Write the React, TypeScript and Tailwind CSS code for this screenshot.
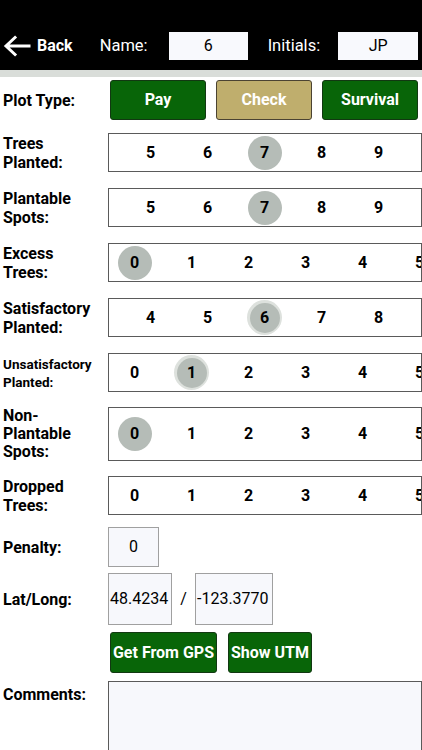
import React from "react";

type PickerProps = {
  values: number[];
  selected: number;
  shift: "a" | "b";
  ring?: boolean;
  tall?: boolean;
};

function Picker({ values, selected, shift, ring, tall }: PickerProps) {
  return (
    <div
      className={
        (tall ? "h-[54px]" : "h-[39px]") +
        " w-[314px] overflow-hidden border-[1.5px] border-[#5a5a5a] bg-white"
      }
    >
      <div
        className={
          shift === "a"
            ? "flex h-full items-center pl-[13px]"
            : "-ml-[3px] flex h-full items-center"
        }
      >
        {values.map((v) => (
          <div key={v} className="flex w-[57px] shrink-0 items-center justify-center">
            {v === selected ? (
              ring ? (
                <span className="flex h-[35px] w-[35px] items-center justify-center rounded-full bg-[#dde1dd]">
                  <span className="flex h-[30px] w-[30px] items-center justify-center rounded-full bg-[#b5bcb7] text-[16px] font-bold text-black">
                    {v}
                  </span>
                </span>
              ) : (
                <span className="flex h-[34px] w-[34px] items-center justify-center rounded-full bg-[#b5bcb7] text-[16px] font-bold text-black">
                  {v}
                </span>
              )
            ) : (
              <span className="text-[16px] font-bold text-black">{v}</span>
            )}
          </div>
        ))}
      </div>
    </div>
  );
}

function Row({
  label,
  children,
  className,
  labelClass,
}: {
  label: React.ReactNode;
  children: React.ReactNode;
  className?: string;
  labelClass?: string;
}) {
  return (
    <div className={"flex items-center " + (className ?? "")}>
      <div className={"w-[108px] shrink-0 pl-[3px] font-bold text-black " + (labelClass ?? "text-[16px] leading-[19px]")}>
        {label}
      </div>
      {children}
    </div>
  );
}

export default function App() {
  return (
    <div
      className="h-[750px] w-[422px] overflow-hidden bg-white"
      style={{ fontFamily: "Roboto, 'Liberation Sans', sans-serif" }}
    >
      {/* Top bar */}
      <div className="h-[70px] bg-black pt-[32px]">
        <div className="flex h-[28px] items-center text-white">
          <svg width="28" height="22" viewBox="0 0 28 22" className="ml-[3px]">
            <path
              d="M26 11H4M12 2.5L3 11l9 8.5"
              fill="none"
              stroke="white"
              strokeWidth="3"
              strokeLinecap="square"
            />
          </svg>
          <span className="ml-[6px] text-[16px] font-bold">Back</span>
          <span className="ml-[27px] text-[16.5px]">Name:</span>
          <div className="ml-[21px] flex h-[28px] w-[79px] items-center justify-center bg-[#f8f9fd] text-[16px] text-black">
            6
          </div>
          <span className="ml-[20px] text-[16.5px]">Initials:</span>
          <div className="ml-[18px] flex h-[28px] w-[80px] items-center justify-center bg-[#f8f9fd] text-[16px] text-black">
            JP
          </div>
        </div>
      </div>
      <div className="h-[7px] bg-[#d9ddd9]" />

      {/* Plot type */}
      <Row label="Plot Type:" className="mt-[3px]">
        <div className="ml-[2px] flex gap-[10px]">
          <button className="h-[40px] w-[96px] rounded-[3px] border border-[#123812] bg-[#086508] text-[16px] font-bold text-white">
            Pay
          </button>
          <button className="h-[40px] w-[96px] rounded-[3px] border border-[#4b4332] bg-[#bfae6d] text-[16px] font-bold text-white">
            Check
          </button>
          <button className="h-[40px] w-[96px] rounded-[3px] border border-[#123812] bg-[#086508] text-[16px] font-bold text-white">
            Survival
          </button>
        </div>
      </Row>

      <Row label={<>Trees<br />Planted:</>} className="mt-[13px]">
        <Picker values={[5, 6, 7, 8, 9]} selected={7} shift="a" />
      </Row>
      <Row label={<>Plantable<br />Spots:</>} className="mt-[16px]">
        <Picker values={[5, 6, 7, 8, 9]} selected={7} shift="a" />
      </Row>
      <Row label={<>Excess<br />Trees:</>} className="mt-[16px]">
        <Picker values={[0, 1, 2, 3, 4, 5]} selected={0} shift="b" />
      </Row>
      <Row label={<>Satisfactory<br />Planted:</>} className="mt-[16px]">
        <Picker values={[4, 5, 6, 7, 8]} selected={6} shift="a" ring />
      </Row>
      <Row
        label={<>Unsatisfactory<br />Planted:</>}
        className="mt-[16px]"
        labelClass="text-[13.5px] leading-[18px]"
      >
        <Picker values={[0, 1, 2, 3, 4, 5]} selected={1} shift="b" ring />
      </Row>
      <Row
        label={<>Non-<br />Plantable<br />Spots:</>}
        className="mt-[15px]"
        labelClass="text-[16px] leading-[18px]"
      >
        <Picker values={[0, 1, 2, 3, 4, 5]} selected={0} shift="b" tall />
      </Row>
      <Row label={<>Dropped<br />Trees:</>} className="mt-[15px]">
        <Picker values={[0, 1, 2, 3, 4, 5]} selected={-1} shift="b" />
      </Row>

      <Row label="Penalty:" className="mt-[12px]">
        <div className="flex h-[40px] w-[51px] items-center justify-center border border-[#a0a0a0] bg-[#f7f8fc] text-[16px] text-black">
          0
        </div>
      </Row>

      <Row label="Lat/Long:" className="mt-[6px]">
        <div className="flex items-center">
          <div className="flex h-[52px] w-[64px] items-center overflow-hidden border border-[#a0a0a0] bg-[#f7f8fc] pl-[1px] text-[16px] text-black">
            48.4234
          </div>
          <span className="w-[23px] text-center text-[16px] text-black">/</span>
          <div className="flex h-[52px] w-[78px] items-center overflow-hidden border border-[#a0a0a0] bg-[#f7f8fc] pl-[1px] text-[16px] text-black">
            -123.3770
          </div>
        </div>
      </Row>

      <div className="mt-[7px] flex gap-[11px] pl-[110px]">
        <button className="h-[41px] w-[107px] whitespace-nowrap rounded-[3px] border border-[#123812] bg-[#086508] text-[16px] font-bold text-white">
          Get From GPS
        </button>
        <button className="h-[41px] w-[84px] whitespace-nowrap rounded-[3px] border border-[#123812] bg-[#086508] text-[16px] font-bold text-white">
          Show UTM
        </button>
      </div>

      <div className="mt-[8px] flex items-start">
        <div className="w-[108px] shrink-0 pl-[3px] pt-[2px] text-[16px] font-bold text-black">Comments:</div>
        <div className="h-[90px] w-[314px] border-[1.5px] border-[#5a5a5a] bg-[#f7f8fc]" />
      </div>
    </div>
  );
}
